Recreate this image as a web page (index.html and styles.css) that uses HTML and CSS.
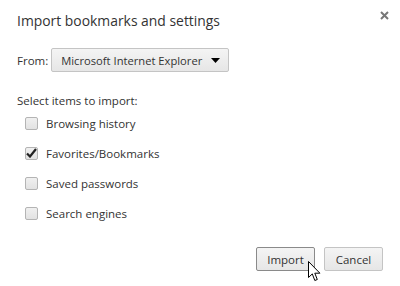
FILE: index.html
```html
<!DOCTYPE html>
<html lang="en">
<head>
    <meta charset="UTF-8">
    <title>Import bookmarks and settings</title>
    <link rel="stylesheet" href="styles.css">
</head>
<body>
    <div class="dialog">
        <div class="title-bar">
            <h1>Import bookmarks and settings</h1>
            <button class="close-button" aria-label="Close">
                <svg width="9" height="9" viewBox="0 0 9 9"><path d="M1 1L8 8M8 1L1 8" stroke="#777" stroke-width="2"/></svg>
            </button>
        </div>

        <div class="from-row">
            <label>From:</label>
            <div class="select-box">
                <span>Microsoft Internet Explorer</span>
                <svg width="9" height="5" viewBox="0 0 9 5"><path d="M0 0H9L4.5 5Z" fill="#000"/></svg>
            </div>
        </div>

        <p class="section-label">Select items to import:</p>
        <ul class="items">
            <li><span class="checkbox"></span>Browsing history</li>
            <li><span class="checkbox checked">
                <svg width="11" height="10" viewBox="0 0 11 10"><path d="M1 5.5L4 8.5L10 1" stroke="#222" stroke-width="2.2" fill="none"/></svg>
            </span>Favorites/Bookmarks</li>
            <li><span class="checkbox"></span>Saved passwords</li>
            <li><span class="checkbox"></span>Search engines</li>
        </ul>

        <div class="buttons">
            <button class="btn btn-focus">Import
                <svg class="cursor" width="13" height="21" viewBox="0 0 13 21"><path d="M0.5 0.5V16.5L4.3 12.9L6.8 19.5L9.3 18.5L6.8 12.2H11.9Z" fill="#fff" stroke="#000" stroke-width="1"/></svg>
            </button>
            <button class="btn">Cancel</button>
        </div>
    </div>
</body>
</html>
```

FILE: styles.css
```css
* {
    margin: 0;
    padding: 0;
    box-sizing: border-box;
}

body {
    font-family: 'Open Sans', 'Noto Sans', sans-serif;
    background: #fff;
    color: #333;
    width: 400px;
    height: 286px;
    overflow: hidden;
}

.dialog {
    padding: 9px 11px 0 17px;
}

.title-bar {
    display: flex;
    justify-content: space-between;
    align-items: flex-start;
}

h1 {
    font-size: 13.9px;
    font-weight: normal;
    color: #333;
    line-height: 20px;
    margin-top: 2px;
}

.close-button {
    background: none;
    border: none;
    width: 9px;
    height: 9px;
    margin-top: 2px;
    display: flex;
}

.from-row {
    display: flex;
    align-items: center;
    gap: 3px;
    margin-top: 17px;
    font-size: 11.5px;
}

.select-box {
    width: 178px;
    height: 24px;
    border: 1px solid #c4c4c4;
    border-radius: 2px;
    background: linear-gradient(#f4f4f4, #e6e6e6);
    display: flex;
    align-items: center;
    justify-content: space-between;
    padding: 0 8px 0 9px;
    font-size: 11.2px;
    color: #333;
}

.section-label {
    font-size: 11.5px;
    margin-top: 21px;
    line-height: 16px;
}

.items {
    list-style: none;
    margin-left: 8px;
    margin-top: 0;
}

.items li {
    display: flex;
    align-items: center;
    gap: 8px;
    height: 30px;
    font-size: 11.5px;
}

.items li:first-child {
    margin-top: -1px;
}

.checkbox {
    width: 13px;
    height: 13px;
    border: 1px solid #b4b4b4;
    border-radius: 2px;
    background: linear-gradient(#f0f0f0, #e2e2e2);
    display: flex;
    align-items: center;
    justify-content: center;
}

.buttons {
    display: flex;
    justify-content: flex-end;
    gap: 9px;
    margin-top: 19px;
    margin-right: 6px;
}

.btn {
    position: relative;
    width: 59px;
    height: 24px;
    border: 1px solid #c4c4c4;
    border-radius: 2px;
    background: linear-gradient(#f4f4f4, #e6e6e6);
    font-family: inherit;
    font-size: 11.5px;
    color: #333;
}

.btn-focus {
    border-color: #8a8a8a;
}

.cursor {
    position: absolute;
    left: 51px;
    top: 13px;
}
```
